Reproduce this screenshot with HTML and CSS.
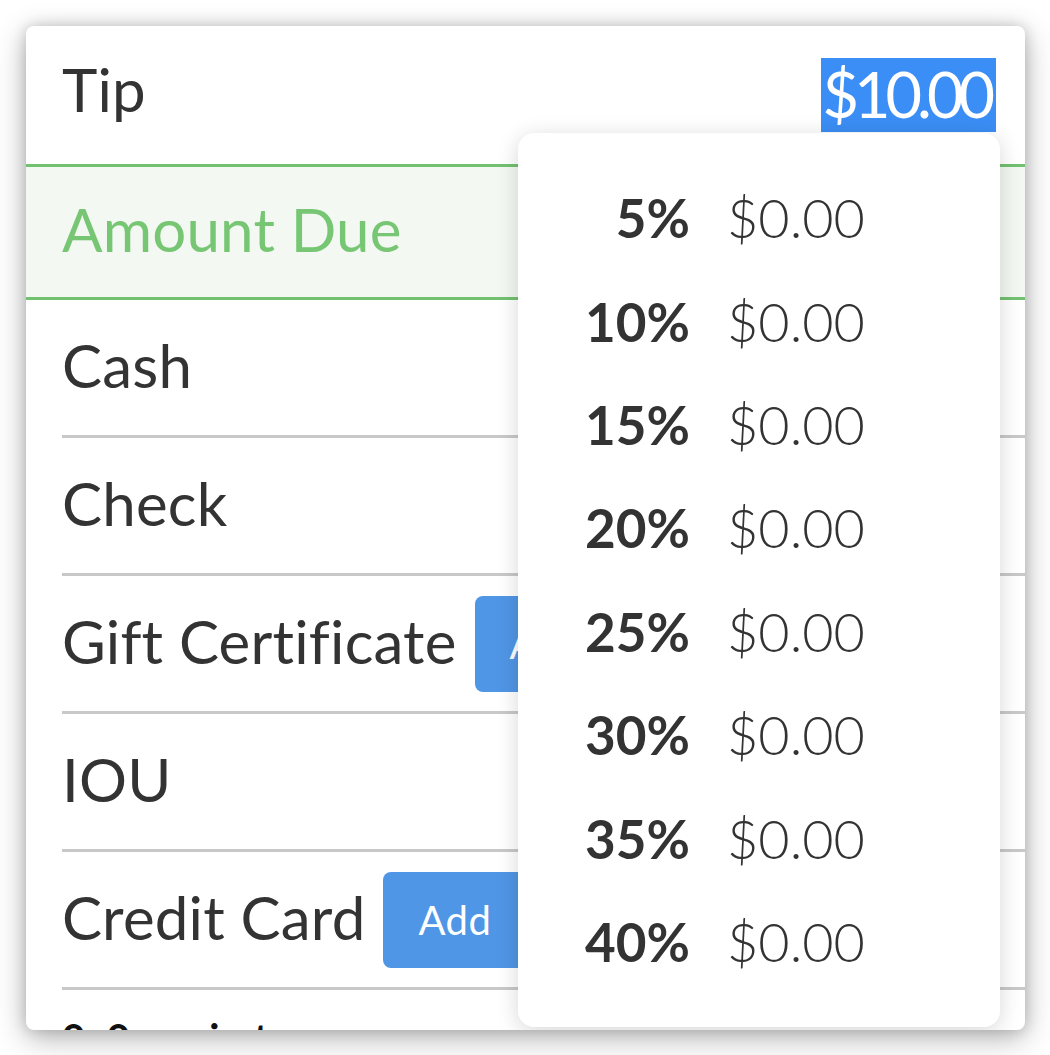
FILE: index.html
```html
<!DOCTYPE html>
<html>
<head>
<meta charset="utf-8">
<link rel="stylesheet" href="styles.css">
</head>
<body>
<div class="stage">
  <div class="card">
    <div class="tip-row">
      <span class="label tip-label">Tip</span>
      <span class="tip-value">$10.00</span>
    </div>
    <div class="due-row">
      <span class="label due-label">Amount Due</span>
    </div>
    <div class="pay-row"><span class="label">Cash</span></div>
    <div class="pay-row"><span class="label">Check</span></div>
    <div class="pay-row"><span class="label">Gift Certificate</span><span class="add-btn">Add</span></div>
    <div class="pay-row"><span class="label">IOU</span></div>
    <div class="pay-row"><span class="label">Credit Card</span><span class="add-btn">Add</span></div>
    <div class="tail-row"><span class="tail-text">0.0 points</span></div>

    <div class="popover">
      <div class="opt"><span class="pct">5%</span><span class="amt">$0.00</span></div>
      <div class="opt"><span class="pct">10%</span><span class="amt">$0.00</span></div>
      <div class="opt"><span class="pct">15%</span><span class="amt">$0.00</span></div>
      <div class="opt"><span class="pct">20%</span><span class="amt">$0.00</span></div>
      <div class="opt"><span class="pct">25%</span><span class="amt">$0.00</span></div>
      <div class="opt"><span class="pct">30%</span><span class="amt">$0.00</span></div>
      <div class="opt"><span class="pct">35%</span><span class="amt">$0.00</span></div>
      <div class="opt"><span class="pct">40%</span><span class="amt">$0.00</span></div>
    </div>
  </div>
</div>
</body>
</html>
```

FILE: styles.css
```css
html, body {
  margin: 0;
  padding: 0;
  background: #ffffff;
}

.stage {
  padding: 26px 25px 25px 26px;
}

.card {
  position: relative;
  width: 999px;
  height: 1004px;
  background: #ffffff;
  border-radius: 8px;
  overflow: hidden;
  box-shadow: 0 8px 30px rgba(0, 0, 0, 0.3), 0 0 14px rgba(0, 0, 0, 0.16);
  font-family: "Lato", "Liberation Sans", sans-serif;
  color: #333333;
}

.label {
  font-size: 60px;
  line-height: 1;
  letter-spacing: 0.2px;
  white-space: nowrap;
  margin-bottom: 6px;
}

.tip-label {
  margin-bottom: 12px;
}

.tip-row {
  height: 138px;
  display: flex;
  align-items: center;
  justify-content: space-between;
  padding: 0 29px 0 36px;
}

.tip-value {
  background: #3b8ef5;
  color: #ffffff;
  font-size: 63px;
  height: 74px;
  line-height: 72px;
  padding: 0 6px 0 1px;
  letter-spacing: -5px;
}

.due-row {
  height: 130px;
  border-top: 3px solid #72c170;
  border-bottom: 3px solid #72c170;
  background: #f3f8f2;
  display: flex;
  align-items: center;
  padding-left: 36px;
}

.due-label {
  color: #77c674;
}

.pay-row {
  margin-left: 36px;
  height: 135px;
  border-bottom: 3px solid #c8c8c8;
  display: flex;
  align-items: center;
}

.add-btn {
  margin-left: 18px;
  height: 96px;
  display: flex;
  align-items: center;
  padding: 0 35px;
  background: #5096e6;
  color: #ffffff;
  border-radius: 8px;
  font-size: 40px;
  letter-spacing: 0.5px;
}

.tail-row {
  margin-left: 36px;
  padding-top: 24px;
}

.tail-text {
  font-size: 40px;
  font-weight: 700;
  color: #111111;
  letter-spacing: 6px;
}

.popover {
  position: absolute;
  left: 492px;
  top: 107px;
  width: 482px;
  height: 861px;
  padding-top: 33px;
  background: #ffffff;
  border-radius: 16px;
  box-shadow: 0 4px 22px rgba(0, 0, 0, 0.16);
  display: flex;
  flex-direction: column;
}

.opt {
  height: 103.4px;
  display: grid;
  grid-template-columns: 172px 1fr;
  column-gap: 37px;
  align-items: center;
}

.pct {
  text-align: right;
  font-weight: 700;
  font-size: 53px;
  color: #333333;
}

.amt {
  font-weight: 300;
  font-size: 54px;
  color: #333333;
}
```
